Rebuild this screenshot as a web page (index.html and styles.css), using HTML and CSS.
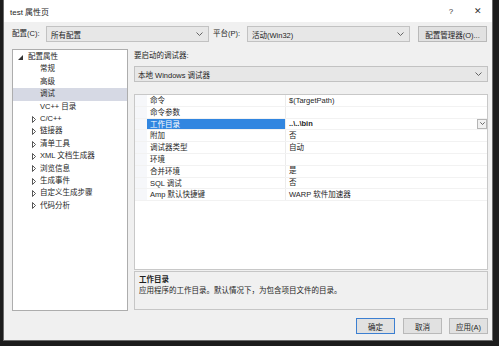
FILE: index.html
```html
<!DOCTYPE html>
<html lang="zh-CN">
<head>
    <meta charset="UTF-8">
    <title>test 属性页</title>
    <link rel="stylesheet" href="styles.css">
</head>
<body>

<div class="window">
    <div class="titlebar">
        <span class="title">test 属性页</span>
        <span class="help">?</span>
        <span class="close">✕</span>
    </div>

    <div class="content">
        <div class="config-row">
            <span class="field-label">配置(C):</span>
            <div class="combo combo-config">
                <span>所有配置</span>
                <svg class="chevron" width="7" height="4" viewBox="0 0 7 4"><path d="M0.5 0.5 L3.5 3.5 L6.5 0.5" fill="none" stroke="#555" stroke-width="0.9"/></svg>
            </div>
            <span class="field-label platform-label">平台(P):</span>
            <div class="combo combo-platform">
                <span>活动(Win32)</span>
                <svg class="chevron" width="7" height="4" viewBox="0 0 7 4"><path d="M0.5 0.5 L3.5 3.5 L6.5 0.5" fill="none" stroke="#555" stroke-width="0.9"/></svg>
            </div>
            <button class="btn btn-manager">配置管理器(O)...</button>
        </div>

        <div class="main">
            <ul class="tree">
                <li class="tree-item level-0">
                    <svg class="twisty" width="5" height="5" viewBox="0 0 5 5"><path d="M5 0 L5 5 L0 5 Z" fill="#333"/></svg>
                    配置属性
                </li>
                <li class="tree-item level-1">常规</li>
                <li class="tree-item level-1">高级</li>
                <li class="tree-item level-1 selected">调试</li>
                <li class="tree-item level-1">VC++ 目录</li>
                <li class="tree-item level-1 collapsed"><svg class="twisty" width="4" height="7" viewBox="0 0 4 7"><path d="M0.5 0.5 L3.5 3.5 L0.5 6.5 Z" fill="none" stroke="#444" stroke-width="0.9"/></svg>C/C++</li>
                <li class="tree-item level-1 collapsed"><svg class="twisty" width="4" height="7" viewBox="0 0 4 7"><path d="M0.5 0.5 L3.5 3.5 L0.5 6.5 Z" fill="none" stroke="#444" stroke-width="0.9"/></svg>链接器</li>
                <li class="tree-item level-1 collapsed"><svg class="twisty" width="4" height="7" viewBox="0 0 4 7"><path d="M0.5 0.5 L3.5 3.5 L0.5 6.5 Z" fill="none" stroke="#444" stroke-width="0.9"/></svg>清单工具</li>
                <li class="tree-item level-1 collapsed"><svg class="twisty" width="4" height="7" viewBox="0 0 4 7"><path d="M0.5 0.5 L3.5 3.5 L0.5 6.5 Z" fill="none" stroke="#444" stroke-width="0.9"/></svg>XML 文档生成器</li>
                <li class="tree-item level-1 collapsed"><svg class="twisty" width="4" height="7" viewBox="0 0 4 7"><path d="M0.5 0.5 L3.5 3.5 L0.5 6.5 Z" fill="none" stroke="#444" stroke-width="0.9"/></svg>浏览信息</li>
                <li class="tree-item level-1 collapsed"><svg class="twisty" width="4" height="7" viewBox="0 0 4 7"><path d="M0.5 0.5 L3.5 3.5 L0.5 6.5 Z" fill="none" stroke="#444" stroke-width="0.9"/></svg>生成事件</li>
                <li class="tree-item level-1 collapsed"><svg class="twisty" width="4" height="7" viewBox="0 0 4 7"><path d="M0.5 0.5 L3.5 3.5 L0.5 6.5 Z" fill="none" stroke="#444" stroke-width="0.9"/></svg>自定义生成步骤</li>
                <li class="tree-item level-1 collapsed"><svg class="twisty" width="4" height="7" viewBox="0 0 4 7"><path d="M0.5 0.5 L3.5 3.5 L0.5 6.5 Z" fill="none" stroke="#444" stroke-width="0.9"/></svg>代码分析</li>
            </ul>

            <div class="pane">
                <div class="pane-label">要启动的调试器:</div>
                <div class="combo combo-debugger">
                    <span>本地 Windows 调试器</span>
                    <svg class="chevron" width="7" height="4" viewBox="0 0 7 4"><path d="M0.5 0.5 L3.5 3.5 L6.5 0.5" fill="none" stroke="#555" stroke-width="0.9"/></svg>
                </div>

                <div class="grid">
                    <div class="grid-row"><span class="margin"></span><span class="name">命令</span><span class="value">$(TargetPath)</span></div>
                    <div class="grid-row"><span class="margin"></span><span class="name">命令参数</span><span class="value"></span></div>
                    <div class="grid-row selected">
                        <span class="margin"></span><span class="name">工作目录</span>
                        <span class="value"><b>..\..\bin</b>
                            <span class="drop-btn"><svg width="5" height="3" viewBox="0 0 5 3"><path d="M0.3 0.3 L2.5 2.5 L4.7 0.3" fill="none" stroke="#444" stroke-width="0.8"/></svg></span>
                        </span>
                    </div>
                    <div class="grid-row"><span class="margin"></span><span class="name">附加</span><span class="value">否</span></div>
                    <div class="grid-row"><span class="margin"></span><span class="name">调试器类型</span><span class="value">自动</span></div>
                    <div class="grid-row"><span class="margin"></span><span class="name">环境</span><span class="value"></span></div>
                    <div class="grid-row"><span class="margin"></span><span class="name">合并环境</span><span class="value">是</span></div>
                    <div class="grid-row"><span class="margin"></span><span class="name">SQL 调试</span><span class="value">否</span></div>
                    <div class="grid-row"><span class="margin"></span><span class="name">Amp 默认快捷键</span><span class="value">WARP 软件加速器</span></div>
                </div>

                <div class="desc">
                    <div class="desc-title">工作目录</div>
                    <div class="desc-text">应用程序的工作目录。默认情况下，为包含项目文件的目录。</div>
                </div>
            </div>
        </div>

        <div class="footer">
            <button class="btn btn-default">确定</button>
            <button class="btn">取消</button>
            <button class="btn">应用(A)</button>
        </div>
    </div>
</div>

</body>
</html>
```

FILE: styles.css
```css
body {
    margin: 0;
    background-color: #1c1c1c;
    font-family: "Liberation Sans", "Noto Sans CJK SC", sans-serif;
    font-size: 7.5px;
    color: #1e1e1e;
    height: 346px;
    overflow: hidden;
}
.window {
    margin-left: 3px;
    width: 490px;
    height: 341px;
    box-sizing: border-box;
    border-left: 1px solid #6b6b6b;
    border-right: 1px solid #6b6b6b;
    border-bottom: 1px solid #6b6b6b;
    background-color: #f0f0f0;
}
.titlebar {
    height: 22px;
    background-color: #fff;
    display: flex;
    align-items: center;
    font-size: 8px;
}
.title {
    margin-left: 6px;
    flex-grow: 1;
}
.help {
    width: 10px;
    text-align: center;
    font-size: 8px;
    color: #333;
}
.close {
    width: 12px;
    margin-left: 16px;
    margin-right: 8px;
    text-align: center;
    font-size: 9px;
    color: #333;
}
.content {
    padding: 0 4px 0 8px;
}
.config-row {
    display: flex;
    align-items: center;
    margin-top: 4px;
    height: 16px;
}
.field-label {
    width: 34px;
    line-height: 16px;
}
.platform-label {
    margin-left: 4px;
}
.combo {
    box-sizing: border-box;
    height: 16px;
    border: 1px solid #c2c2c2;
    background-color: #e7e7e7;
    display: flex;
    align-items: center;
    justify-content: space-between;
    padding: 0 5px 0 4px;
}
.combo-config,
.combo-platform {
    width: 163px;
}
.combo-debugger {
    width: 100%;
    padding-left: 3px;
}
.btn {
    box-sizing: border-box;
    height: 16px;
    border: 1px solid #b9b9b9;
    background-color: #e1e1e1;
    font-family: inherit;
    font-size: 7.5px;
    color: #1e1e1e;
    padding: 0;
}
.btn-manager {
    margin-left: 8px;
    width: 69px;
}
.main {
    display: flex;
    margin-top: 7px;
    height: 262px;
}
.tree {
    list-style: none;
    margin: 0;
    padding: 1px 0 0 0;
    width: 116px;
    box-sizing: border-box;
    border: 1px solid #adadad;
    background-color: #fff;
}
.tree-item {
    height: 12.4px;
    line-height: 12.4px;
    position: relative;
    white-space: nowrap;
}
.tree-item.level-0 {
    padding-left: 15px;
}
.tree-item.level-1 {
    padding-left: 27px;
}
.tree-item.selected {
    background-color: #d6d9e4;
}
.tree-item .twisty {
    position: absolute;
    top: 3.5px;
}
.level-0 .twisty {
    left: 5px;
    top: 4px;
}
.collapsed .twisty {
    left: 19px;
    top: 2.8px;
}
.pane {
    margin-left: 6px;
    flex-grow: 1;
    display: flex;
    flex-direction: column;
}
.pane-label {
    height: 17px;
    line-height: 14px;
}
.grid {
    margin-top: 12px;
    height: 176px;
    box-sizing: border-box;
    border: 1px solid #c8c8c8;
    background-color: #fff;
}
.grid-row {
    display: flex;
    height: 11.8px;
    line-height: 11.8px;
    border-bottom: 1px solid #f2f2f2;
    box-sizing: border-box;
}
.grid-row .margin {
    width: 12px;
    background-color: #f6f7fa;
}
.grid-row .name {
    width: 135px;
    padding-left: 3px;
    border-right: 1px solid #ececec;
}
.grid-row .value {
    flex-grow: 1;
    padding-left: 3px;
    display: flex;
    align-items: center;
    justify-content: space-between;
}
.grid-row.selected .name {
    background-color: #3186e0;
    color: #fff;
}
.grid-row.selected b {
    font-weight: bold;
}
.drop-btn {
    box-sizing: border-box;
    width: 10px;
    height: 10px;
    border: 1px solid #b5b5b5;
    background-color: #f0f0f0;
    display: flex;
    align-items: center;
    justify-content: center;
    margin-right: 0;
}
.desc {
    margin-top: 1px;
    height: 39px;
    box-sizing: border-box;
    border: 1px solid #c6c6c6;
    background-color: #f0f0f0;
    padding: 3px 4px;
}
.desc-title {
    font-weight: bold;
    line-height: 10px;
}
.desc-text {
    line-height: 11px;
}
.footer {
    display: flex;
    justify-content: flex-end;
    gap: 7px;
    margin-top: 7px;
}
.footer .btn {
    width: 39px;
    height: 16px;
}
.btn-default {
    border: 1px solid #3c7fd1;
    margin-right: 1px;
}
```
